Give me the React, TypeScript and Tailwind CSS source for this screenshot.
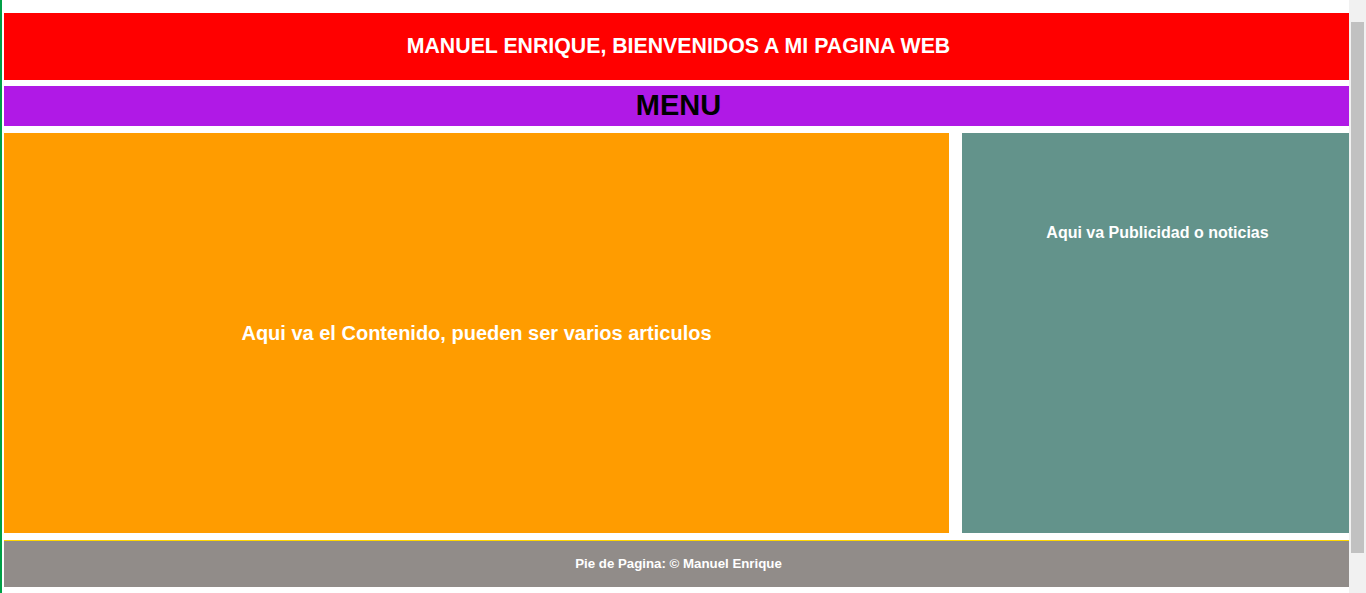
export default function App() {
  return (
    <div className="flex h-[593px] overflow-hidden bg-white">
      <div className="min-h-[624px] min-w-0 flex-1 overflow-hidden border-l-2 border-[#00a046] pl-[2px] pt-[13px] font-['Liberation_Sans',Arial,sans-serif]">
        <div className="w-[1349px]">
          {/* Header */}
          <header className="flex h-[67px] items-center justify-center bg-[#ff0000]">
            <h3 className="text-[21.3px] font-bold text-white">MANUEL ENRIQUE, BIENVENIDOS A MI PAGINA WEB</h3>
          </header>

          {/* Menu */}
          <nav className="mt-[6px] flex h-[40px] items-center justify-center bg-[#b019e6]">
            <h1 className="text-[29px] font-bold text-black">MENU</h1>
          </nav>

          {/* Content + aside */}
          <div className="mt-[7px] grid h-[400px] grid-cols-[945px_1fr] gap-[13px]">
            <main className="flex items-center justify-center bg-[#ff9c00]">
              <h2 className="text-[20px] font-bold text-white">Aqui va el Contenido, pueden ser varios articulos</h2>
            </main>
            <aside className="bg-[#63938b] pt-[88px] text-center">
              <h4 className="text-[16px] font-bold text-white">Aqui va Publicidad o noticias</h4>
            </aside>
          </div>

          {/* Footer */}
          <footer className="mt-[7px] flex h-[47px] items-center justify-center border-t border-[#ffd700] bg-[#918c89]">
            <h5 className="text-[13.28px] font-bold text-white">Pie de Pagina: © Manuel Enrique</h5>
          </footer>
        </div>
      </div>

      {/* Window scrollbar */}
      <div className="w-[17px] shrink-0 bg-[#f1f1f1] px-[2px] pt-[22px]">
        <div className="h-[531px] bg-[#c1c1c1]" />
      </div>
    </div>
  );
}
